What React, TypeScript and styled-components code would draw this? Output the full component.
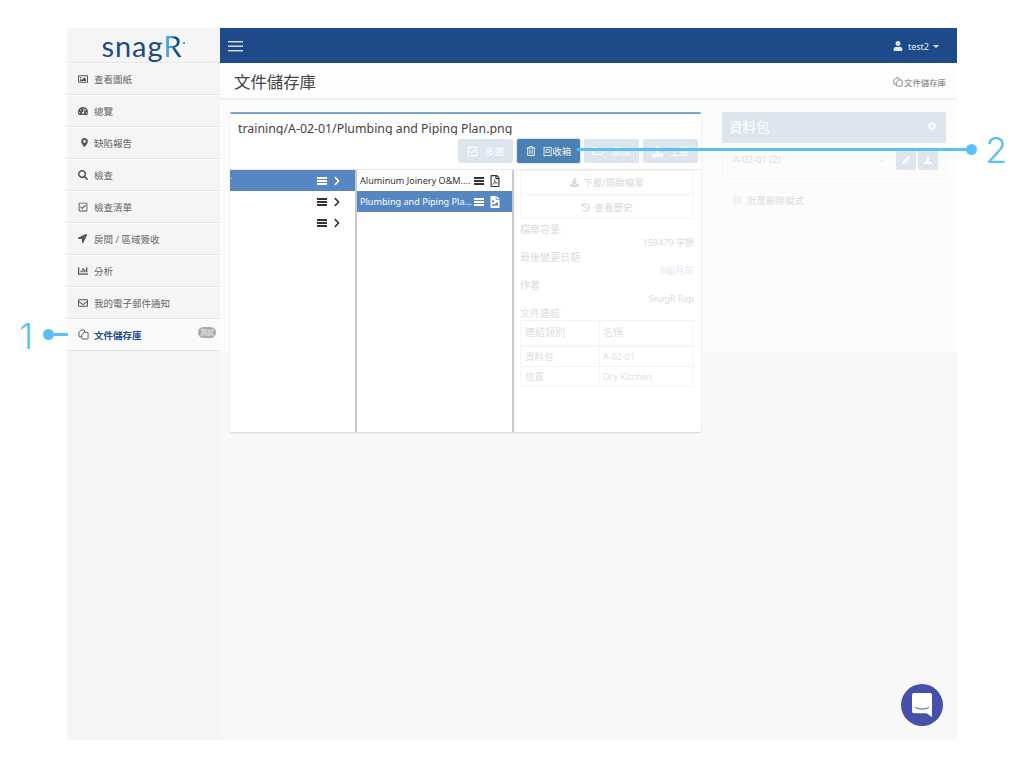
import React from "react";
import styled, { createGlobalStyle } from "styled-components";
import {
  FaRegCheckSquare,
  FaChartBar,
  FaChevronRight,
  FaChevronDown,
  FaDownload,
  FaFileImage,
  FaRegFolderOpen,
  FaHistory,
  FaLocationArrow,
  FaMapMarkerAlt,
  FaPen,
  FaPlusCircle,
  FaRegEnvelope,
  FaRegFilePdf,
  FaRegImage,
  FaSearch,
  FaTachometerAlt,
  FaRegTrashAlt,
  FaUpload,
  FaUser,
} from "react-icons/fa";

const fontStack = `"Noto Sans", "Noto Sans CJK TC", sans-serif`;
const navy = "#1f4a8a";
const callout = "#5ac0f6";
const faded = "#dde6ef";
const fadedText = "#dcdcdc";

const GlobalStyle = createGlobalStyle`
  html, body {
    margin: 0;
    padding: 0;
    background: #fff;
    font-family: ${fontStack};
  }
  * { box-sizing: border-box; }
`;

const Page = styled.div`
  position: relative;
  width: 1024px;
  height: 768px;
  padding: 28px 67px;
  overflow: hidden;
`;

const Frame = styled.div`
  position: relative;
  display: flex;
  width: 890px;
  height: 712px;
  background: #f8f8f8;
`;

const Sidebar = styled.aside`
  width: 153px;
  flex: none;
  background: #f5f5f5;
`;

const Brand = styled.div`
  height: 35px;
  display: flex;
  align-items: center;
  justify-content: center;
  font-family: "Lato", sans-serif;
  font-size: 29px;
  line-height: 35px;
  letter-spacing: 0.9px;
  color: ${navy};
  border-bottom: 1px solid #e6e6e6;
`;

const BrandR = styled.span`
  background: linear-gradient(90deg, #45a3df 0 45%, ${navy} 60%);
  -webkit-background-clip: text;
  background-clip: text;
  color: transparent;
`;

const BrandDot = styled.span`
  width: 2px;
  height: 2px;
  margin: -4px 0 0 1px;
  background: #45a3df;
`;

const NavItem = styled.div<{ $active?: boolean }>`
  height: 32px;
  display: flex;
  align-items: center;
  padding: 0 4px 0 11px;
  font-size: 9.5px;
  font-weight: ${(p) => (p.$active ? 700 : 400)};
  color: ${(p) => (p.$active ? navy : "#666")};
  background: ${(p) => (p.$active ? "#fafafa" : "transparent")};
  border-bottom: 1px solid #e4e4e4;
  box-shadow: inset 0 1px 0 #fbfbfb;
`;

const NavIcon = styled.span<{ $size?: number; $inset?: number }>`
  width: 16px;
  padding-left: ${(p) => p.$inset ?? 0}px;
  display: flex;
  align-items: center;
  font-size: ${(p) => p.$size ?? 10}px;
  color: #555;
`;

const Badge = styled.span`
  margin-left: auto;
  width: 18px;
  height: 11px;
  border-radius: 6px;
  background: #aaa;
  color: #eee;
  font-size: 7px;
  line-height: 11px;
  text-align: center;
  font-weight: 400;
  margin-top: -4px;
`;

const Main = styled.main`
  flex: 1;
  display: flex;
  flex-direction: column;
  min-width: 0;
`;

const TopBar = styled.header`
  height: 35px;
  flex: none;
  display: flex;
  align-items: center;
  justify-content: space-between;
  padding: 1px 18px 0 8px;
  background: ${navy};
  color: #fff;
`;

const UserMenu = styled.div`
  display: flex;
  align-items: center;
  gap: 5px;
  font-size: 9px;
  color: #e4eaf3;
`;

const Caret = styled.span`
  width: 0;
  height: 0;
  margin-left: -1px;
  border-left: 3px solid transparent;
  border-right: 3px solid transparent;
  border-top: 3px solid #e4eaf3;
`;

const PageHead = styled.div`
  height: 37px;
  flex: none;
  display: flex;
  align-items: center;
  justify-content: space-between;
  padding: 0 11px 0 14px;
  background: #fdfdfd;
  border-bottom: 2px solid #eeeeee;
`;

const PageTitle = styled.h1`
  margin: 0;
  font-size: 16.4px;
  font-weight: 400;
  color: #444;
`;

const Crumb = styled.div`
  display: flex;
  align-items: center;
  gap: 1px;
  margin-top: 3px;
  font-size: 8.4px;
  color: #777;
`;

const Content = styled.div`
  height: 253px;
  flex: none;
  display: flex;
  align-items: flex-start;
  gap: 21px;
  padding: 12px 11px 0 10px;
  background: #fcfcfc;
`;

const Card = styled.section`
  width: 471px;
  height: 320px;
  flex: none;
  display: flex;
  flex-direction: column;
  background: #fff;
  border-top: 2px solid #78a4cc;
  border-radius: 2px;
  box-shadow: 0 1px 2px rgba(0, 0, 0, 0.14);
`;

const CardTitle = styled.div`
  height: 21px;
  padding: 6px 0 0 8px;
  overflow: hidden;
  font-size: 12.35px;
  line-height: 18px;
  color: #444;
  white-space: nowrap;
`;

const Toolbar = styled.div`
  height: 24px;
  margin-top: 4px;
  flex: none;
  display: flex;
  justify-content: flex-end;
  gap: 4px;
  padding-right: 3px;
`;

const ToolButton = styled.div<{ $active?: boolean; $width: number }>`
  width: ${(p) => p.$width}px;
  display: flex;
  align-items: center;
  justify-content: center;
  gap: 7px;
  font-size: 9.5px;
  border-radius: 2px;
  color: ${(p) => (p.$active ? "#f2f5f9" : "#fff")};
  background: ${(p) => (p.$active ? "#4b80b2" : faded)};
  box-shadow: ${(p) => (p.$active ? "0 0 0 1px #dce6ef" : "none")};
`;

const Columns = styled.div`
  flex: 1;
  margin-top: 6px;
  display: flex;
  min-height: 0;
  border-top: 1px solid #e8e8e8;
`;

const TreeColumn = styled.div<{ $width: number }>`
  width: ${(p) => p.$width}px;
  flex: none;
  border-right: 2px solid #c9c9c9;
`;

const Row = styled.div<{ $selected?: boolean }>`
  height: 21px;
  display: flex;
  align-items: center;
  color: ${(p) => (p.$selected ? "#fff" : "#333")};
  background: ${(p) => (p.$selected ? "#5787c3" : "transparent")};
`;

const RowName = styled.span`
  width: 114px;
  margin-left: 3px;
  font-size: 9.1px;
  white-space: nowrap;
  overflow: hidden;
`;

const ClippedName = styled.span`
  width: 2px;
  overflow: hidden;
  font-size: 9.5px;
  margin-right: 85px;
  color: #fff;
`;

const MenuGlyph = styled.span<{ $inset?: number }>`
  width: 10px;
  height: 8px;
  flex: none;
  margin-left: ${(p) => p.$inset ?? 0}px;
  border-top: 2px solid currentColor;
  border-bottom: 2px solid currentColor;
  position: relative;
  &::after {
    content: "";
    position: absolute;
    left: 0;
    right: 0;
    top: 1px;
    height: 2px;
    background: currentColor;
  }
`;

const RowIcon = styled.span<{ $gap: number; $size: number }>`
  display: flex;
  align-items: center;
  margin-left: ${(p) => p.$gap}px;
  font-size: ${(p) => p.$size}px;
`;

const Details = styled.div`
  flex: 1;
  padding: 0 7px 0 6px;
  font-size: 10px;
  color: ${fadedText};
`;

const DetailButton = styled.div`
  height: 24px;
  margin-bottom: 1px;
  display: flex;
  align-items: center;
  justify-content: center;
  gap: 4px;
  border: 1px solid #f5f5f5;
  border-radius: 2px;
  font-size: 9.5px;
  color: #d8d8d8;
`;

const DetailLabel = styled.div`
  height: 14px;
  line-height: 14px;
`;

const DetailValue = styled.div<{ $tint?: boolean }>`
  height: 14px;
  line-height: 14px;
  text-align: right;
  font-size: ${(p) => (p.$tint ? 9.5 : 9)}px;
  color: ${(p) => (p.$tint ? "#dbe8f4" : fadedText)};
`;

const LinkTable = styled.table`
  width: 174px;
  border-collapse: collapse;
  table-layout: fixed;
  font-size: 9px;
  color: #e0e0e0;
  td, th {
    border: 1px solid #f5f5f5;
    padding: 0 4px;
    font-weight: 400;
    text-align: left;
    height: 20.5px;
  }
  td:first-child { font-size: 9.5px; }
  th {
    height: 25px;
    padding-bottom: 2px;
    font-size: 10px;
    border-bottom-width: 2px;
  }
  th:first-child { width: 79px; }
  td:last-child, th:last-child { padding-left: 3px; }
`;

const PackagePanel = styled.section`
  width: 224px;
  flex: none;
`;

const PackageHead = styled.div`
  height: 31px;
  display: flex;
  align-items: center;
  justify-content: space-between;
  padding: 0 10px 3px 7px;
  background: ${faded};
  color: #fff;
  font-size: 13.5px;
  border-radius: 2px 2px 0 0;
`;

const PackageBody = styled.div`
  height: 36px;
  display: flex;
  align-items: center;
  padding: 0 7px 2px 10px;
  border: 1px solid #f6f6f6;
  border-top: none;
  font-size: 9.5px;
  color: ${fadedText};
`;

const SquareButton = styled.span`
  width: 20px;
  height: 20px;
  margin-left: 2px;
  display: flex;
  align-items: center;
  justify-content: center;
  border-radius: 2px;
  background: ${faded};
  color: #fff;
  font-size: 8px;
`;

const BulkToggle = styled.label`
  display: flex;
  align-items: center;
  gap: 6px;
  padding: 14px 0 0 11px;
  font-size: 9.5px;
  color: ${fadedText};
`;

const CheckBox = styled.span`
  width: 8px;
  height: 8px;
  background: #f4f4f4;
  border: 1px solid #ececec;
  border-radius: 1px;
`;

const ChatBubble = styled.div`
  position: absolute;
  right: 14px;
  bottom: 14px;
  width: 42px;
  height: 42px;
  display: flex;
  align-items: center;
  justify-content: center;
  border-radius: 50%;
  background: #4450a9;
`;

const CalloutLine = styled.div<{ $left: number; $top: number; $width: number }>`
  position: absolute;
  left: ${(p) => p.$left}px;
  top: ${(p) => p.$top}px;
  width: ${(p) => p.$width}px;
  height: 3px;
  background: ${callout};
`;

const CalloutDot = styled.div<{ $left: number; $top: number }>`
  position: absolute;
  left: ${(p) => p.$left}px;
  top: ${(p) => p.$top}px;
  width: 11px;
  height: 11px;
  border-radius: 50%;
  background: ${callout};
`;

const CalloutNumber = styled.div<{ $left: number; $top: number }>`
  position: absolute;
  left: ${(p) => p.$left}px;
  top: ${(p) => p.$top}px;
  font-family: "Inter", "Liberation Sans", sans-serif;
  font-weight: 300;
  font-size: 36px;
  line-height: 40px;
  color: ${callout};
`;

const DocsIcon = ({ size = 11 }: { size?: number }) => (
  <svg width={size} height={size} viewBox="0 0 12 12" fill="none" stroke="currentColor" strokeWidth="1.05">
    <path d="M3.8 8.6H2a1 1 0 0 1-1-1V3.6L3.6 1h2.6a1 1 0 0 1 1 1v1.4" />
    <path d="M7 3.6h3a1 1 0 0 1 1 1V10a1 1 0 0 1-1 1H5a1 1 0 0 1-1-1V6.4z" />
  </svg>
);

const Hamburger = () => (
  <svg width="16" height="11" viewBox="0 0 16 11" fill="#dfe6f0">
    <rect y="0" width="15" height="1.4" />
    <rect y="4.5" width="15" height="1.4" />
    <rect y="9" width="15" height="1.4" />
  </svg>
);

const ChatGlyph = () => (
  <svg width="20" height="24" viewBox="0 0 20 24">
    <path d="M2 0h16a2 2 0 0 1 2 2v22l-5.5-3.8H2a2 2 0 0 1-2-2V2a2 2 0 0 1 2-2z" fill="#fff" />
    <path d="M3.5 14.5c3.5 2.2 9.5 2.2 13 0" fill="none" stroke="#4450a9" strokeWidth="1" strokeLinecap="round" />
  </svg>
);

const navItems = [
  { icon: <FaRegImage />, label: "查看圖紙" },
  { icon: <FaTachometerAlt />, label: "總覽" },
  { icon: <FaMapMarkerAlt />, label: "缺陷報告", size: 9, inset: 2 },
  { icon: <FaSearch />, label: "檢查" },
  { icon: <FaRegCheckSquare />, label: "檢查清單" },
  { icon: <FaLocationArrow />, label: "房間 / 區域簽收", size: 9 },
  { icon: <FaChartBar />, label: "分析" },
  { icon: <FaRegEnvelope />, label: "我的電子郵件通知" },
];

export default function App() {
  return (
    <Page>
      <GlobalStyle />
      <Frame>
        <Sidebar>
          <Brand>
            snag<BrandR>R</BrandR>
            <BrandDot />
          </Brand>
          {navItems.map((item) => (
            <NavItem key={item.label}>
              <NavIcon $size={item.size} $inset={item.inset}>
                {item.icon}
              </NavIcon>
              {item.label}
            </NavItem>
          ))}
          <NavItem $active>
            <NavIcon>
              <DocsIcon />
            </NavIcon>
            文件儲存庫
            <Badge>測試</Badge>
          </NavItem>
        </Sidebar>
        <Main>
          <TopBar>
            <Hamburger />
            <UserMenu>
              <FaUser size={10} />
              test2
              <Caret />
            </UserMenu>
          </TopBar>
          <PageHead>
            <PageTitle>文件儲存庫</PageTitle>
            <Crumb>
              <DocsIcon size={10} />
              文件儲存庫
            </Crumb>
          </PageHead>
          <Content>
            <Card>
              <CardTitle>training/A-02-01/Plumbing and Piping Plan.png</CardTitle>
              <Toolbar>
                <ToolButton $width={55}>
                  <FaRegCheckSquare size={11} />
                  多選
                </ToolButton>
                <ToolButton $width={63} $active>
                  <FaRegTrashAlt size={10} />
                  回收箱
                </ToolButton>
                <ToolButton $width={55}>
                  <FaRegFolderOpen size={12} />
                  添加
                </ToolButton>
                <ToolButton $width={55}>
                  <FaUpload size={11} />
                  上載
                </ToolButton>
              </Toolbar>
              <Columns>
                <TreeColumn $width={127}>
                  <Row $selected>
                    <ClippedName>1</ClippedName>
                    <MenuGlyph />
                    <RowIcon $gap={5} $size={10}>
                      <FaChevronRight />
                    </RowIcon>
                  </Row>
                  <Row>
                    <MenuGlyph $inset={87} />
                    <RowIcon $gap={5} $size={10}>
                      <FaChevronRight />
                    </RowIcon>
                  </Row>
                  <Row>
                    <MenuGlyph $inset={87} />
                    <RowIcon $gap={5} $size={10}>
                      <FaChevronRight />
                    </RowIcon>
                  </Row>
                </TreeColumn>
                <TreeColumn $width={157}>
                  <Row>
                    <RowName>Aluminum Joinery O&amp;M....</RowName>
                    <MenuGlyph />
                    <RowIcon $gap={5} $size={12}>
                      <FaRegFilePdf />
                    </RowIcon>
                  </Row>
                  <Row $selected>
                    <RowName>Plumbing and Piping Pla...</RowName>
                    <MenuGlyph />
                    <RowIcon $gap={5} $size={12}>
                      <FaFileImage />
                    </RowIcon>
                  </Row>
                </TreeColumn>
                <Details>
                  <DetailButton>
                    <FaDownload size={9} />
                    下載/開啟檔案
                  </DetailButton>
                  <DetailButton>
                    <FaHistory size={9} />
                    查看歷史
                  </DetailButton>
                  <DetailLabel style={{ marginTop: 3 }}>檔案容量</DetailLabel>
                  <DetailValue>159479 字節</DetailValue>
                  <DetailLabel>最後變更日期</DetailLabel>
                  <DetailValue $tint>8個月前</DetailValue>
                  <DetailLabel>作者</DetailLabel>
                  <DetailValue>SnagR Rep</DetailValue>
                  <DetailLabel>文件連結</DetailLabel>
                  <LinkTable>
                    <thead>
                      <tr>
                        <th>連結類別</th>
                        <th>名稱</th>
                      </tr>
                    </thead>
                    <tbody>
                      <tr>
                        <td>資料包</td>
                        <td>A-02-01</td>
                      </tr>
                      <tr>
                        <td>位置</td>
                        <td>Dry Kitchen</td>
                      </tr>
                    </tbody>
                  </LinkTable>
                </Details>
              </Columns>
            </Card>
            <PackagePanel>
              <PackageHead>
                資料包
                <FaPlusCircle size={8} />
              </PackageHead>
              <PackageBody>
                A-02-01 (2)
                <FaChevronDown size={8} color="#f0f0f0" style={{ marginLeft: "auto", marginRight: 8 }} />
                <SquareButton>
                  <FaPen />
                </SquareButton>
                <SquareButton>
                  <FaDownload />
                </SquareButton>
              </PackageBody>
              <BulkToggle>
                <CheckBox />
                批量刪除模式
              </BulkToggle>
            </PackagePanel>
          </Content>
        </Main>
        <ChatBubble>
          <ChatGlyph />
        </ChatBubble>
      </Frame>
      <CalloutNumber $left={19} $top={316}>1</CalloutNumber>
      <CalloutDot $left={43} $top={329} />
      <CalloutLine $left={48} $top={333} $width={20} />
      <CalloutLine $left={577} $top={148} $width={392} />
      <CalloutDot $left={966} $top={144} />
      <CalloutNumber $left={985} $top={130}>2</CalloutNumber>
    </Page>
  );
}
